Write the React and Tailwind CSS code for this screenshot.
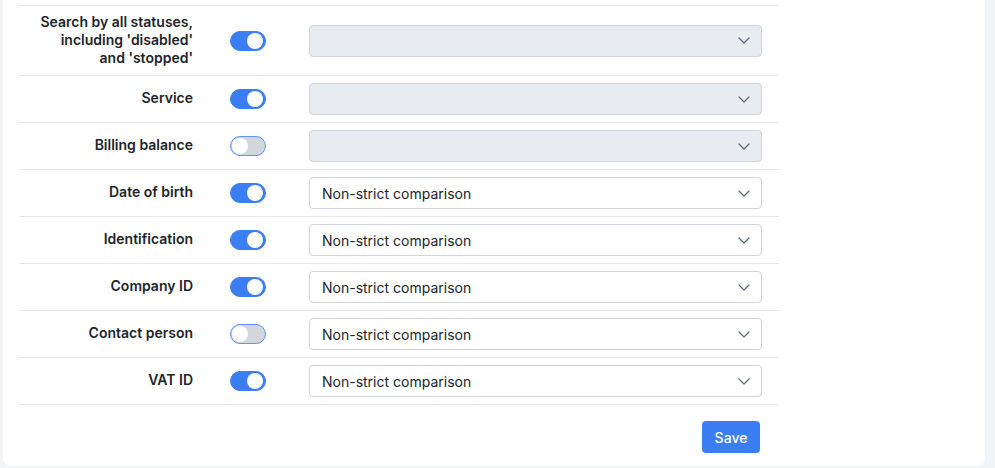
const rows = [
    { label: ["Search by all statuses,", "including 'disabled'", "and 'stopped'"], on: true, value: "", disabled: true, tall: true },
    { label: ["Service"], on: true, value: "", disabled: true },
    { label: ["Billing balance"], on: false, value: "", disabled: true },
    { label: ["Date of birth"], on: true, value: "Non-strict comparison" },
    { label: ["Identification"], on: true, value: "Non-strict comparison" },
    { label: ["Company ID"], on: true, value: "Non-strict comparison" },
    { label: ["Contact person"], on: false, value: "Non-strict comparison" },
    { label: ["VAT ID"], on: true, value: "Non-strict comparison" },
];

const Toggle = ({ on }) => (
    <div
        className={
            on
                ? "w-[36px] h-[20px] rounded-full bg-[#3b7ef3] border border-[#3b7ef3] flex items-center justify-end px-[2px]"
                : "w-[36px] h-[20px] rounded-full bg-[#d3d6dc] border border-[#5b93f4] flex items-center justify-start px-[1px]"
        }
    >
        <div className="w-[16px] h-[16px] rounded-full bg-white" />
    </div>
);

const Chevron = () => (
    <svg width="12" height="7" viewBox="0 0 12 7" fill="none" className="shrink-0">
        <path d="M1 1l5 5 5-5" stroke="#5f6b7a" strokeWidth="1.2" strokeLinecap="round" strokeLinejoin="round" />
    </svg>
);

const Select = ({ value, disabled }) => (
    <div
        className={
            "w-[453px] h-[32px] rounded-[4px] border border-[#ced4da] flex items-center justify-between pl-[12px] pr-[11px] " +
            (disabled ? "bg-[#e8ebef]" : "bg-white")
        }
    >
        <span className="text-[14px] text-[#212529]">{value}</span>
        <Chevron />
    </div>
);

export default function App() {
    return (
        <div className="w-[995px] h-[468px] bg-[#f3f4f8] font-['Inter',sans-serif] overflow-hidden">
            <div className="ml-[3px] w-[982px] h-[466px] bg-white rounded-b-lg pt-[5px] px-[16px]">
                <div className="w-[760px] border-t border-[#e6e8eb]">
                    {rows.map((r, i) => (
                        <div
                            key={i}
                            className={
                                "flex items-center border-b border-[#e6e8eb] " + (r.tall ? "h-[70px]" : "h-[47px]")
                            }
                        >
                            <div className="w-[174px] text-right text-[14px] font-semibold text-[#212529] leading-[18px] -mt-[2px]">
                                {r.label.map((l, j) => (
                                    <div key={j}>{l}</div>
                                ))}
                            </div>
                            <div className="ml-[37px] w-[36px]">
                                <Toggle on={r.on} />
                            </div>
                            <div className="ml-[43px]">
                                <Select value={r.value} disabled={r.disabled} />
                            </div>
                        </div>
                    ))}
                </div>
                <div className="w-[741px] flex justify-end mt-[16px]">
                    <button className="w-[58px] h-[32px] rounded-[4px] bg-[#3b7ef3] text-white text-[14px] font-medium">
                        Save
                    </button>
                </div>
            </div>
        </div>
    );
}
